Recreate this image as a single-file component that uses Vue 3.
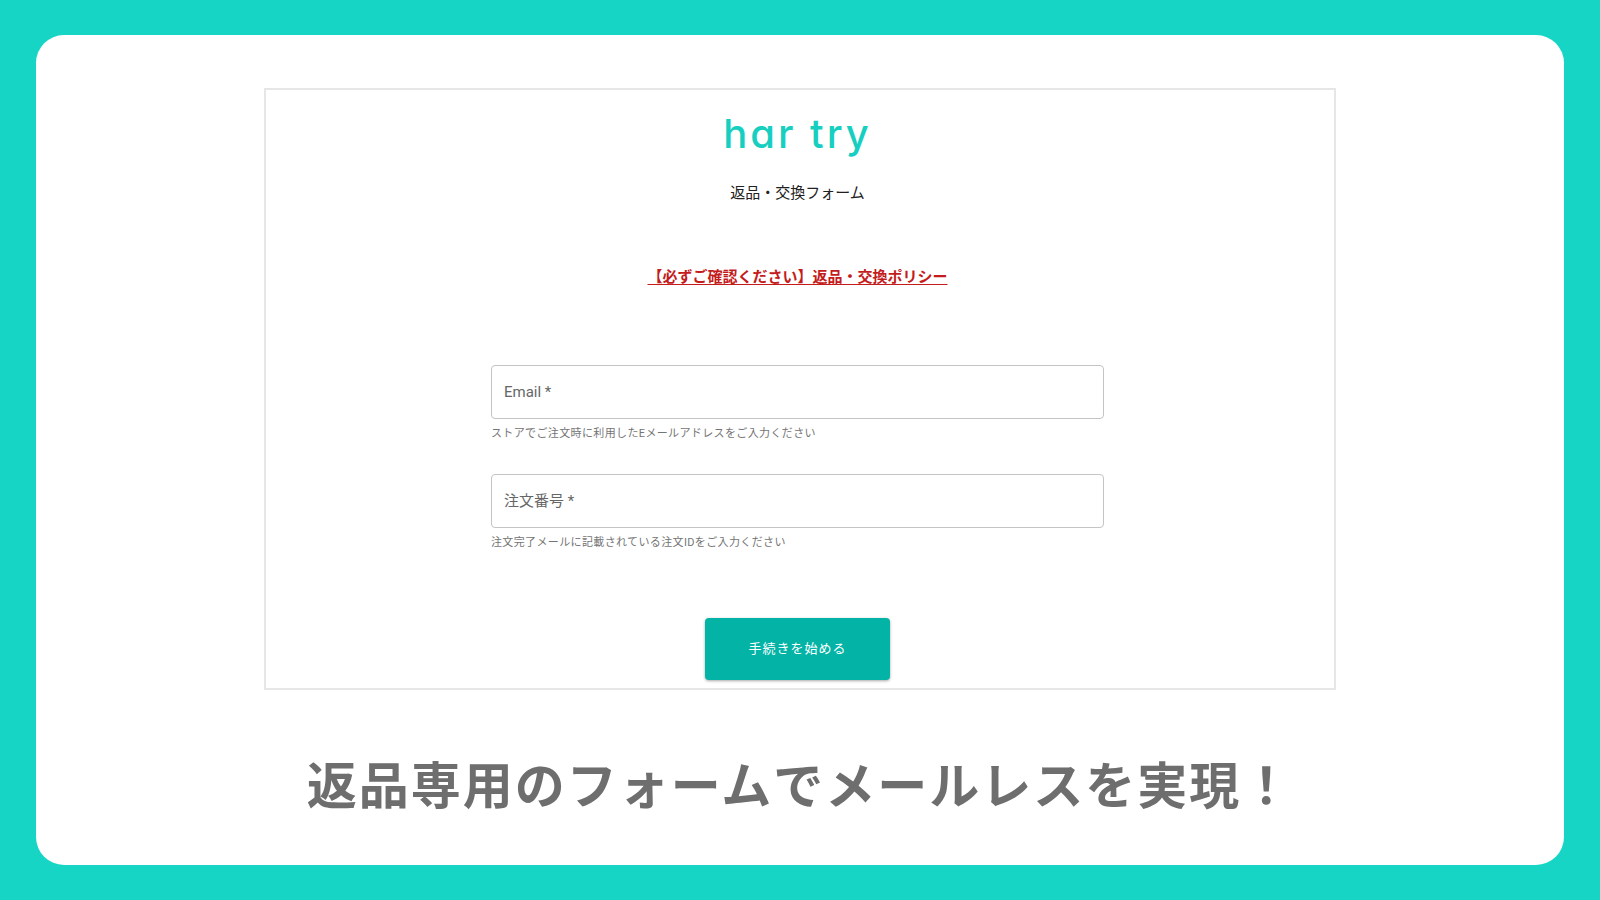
<script setup>
import { ref } from 'vue'

const fields = ref([
  { id: 'email', type: 'email', label: 'Email', value: '', help: 'ストアでご注文時に利用したEメールアドレスをご入力ください' },
  { id: 'order', type: 'text', label: '注文番号', value: '', help: '注文完了メールに記載されている注文IDをご入力ください' },
])
</script>

<template>
  <div class="page">
    <main class="card">
      <section class="frame">
        <div class="logo">har try</div>
        <h1 class="title">返品・交換フォーム</h1>
        <a class="policy" href="#policy">【必ずご確認ください】返品・交換ポリシー</a>
        <form class="form" novalidate @submit.prevent>
          <div v-for="f in fields" :key="f.id" class="field">
            <div class="control">
              <input
                :id="f.id"
                v-model="f.value"
                class="input"
                :type="f.type"
                required
                :aria-describedby="f.id + '-help'"
              />
              <label v-show="!f.value" class="label" :for="f.id">{{ f.label }} *</label>
            </div>
            <p :id="f.id + '-help'" class="help">{{ f.help }}</p>
          </div>
          <button class="submit" type="submit">手続きを始める</button>
        </form>
      </section>
      <p class="headline">返品専用のフォームでメールレスを実現！</p>
    </main>
  </div>
</template>

<style>
body {
  margin: 0;
}
</style>

<style scoped>
.page {
  box-sizing: border-box;
  min-height: 100vh;
  display: flex;
  padding: 35px 36px;
  background: #17d5c5;
  font-family: Roboto, "Noto Sans CJK JP", sans-serif;
}

.card {
  flex: 1;
  min-width: 0;
  display: flex;
  flex-direction: column;
  align-items: center;
  padding: 53px 24px 24px;
  box-sizing: border-box;
  border-radius: 28px;
  background: #fff;
}

.frame {
  box-sizing: border-box;
  width: 100%;
  max-width: 1072px;
  display: flex;
  flex-direction: column;
  align-items: center;
  padding: 18px 5px 8px 0;
  border: 2px solid #e6e6e6;
}

.logo {
  color: #17cfc0;
  font-family: Inter, sans-serif;
  font-size: 40px;
  font-weight: 500;
  font-feature-settings: "cv11";
  line-height: 52px;
  letter-spacing: 3px;
}

.title {
  margin: 23px 0 0;
  color: #212121;
  font-size: 15px;
  font-weight: 400;
  line-height: 20px;
}

.policy {
  margin-top: 62px;
  color: #c41c1c;
  font-size: 15px;
  font-weight: 700;
  line-height: 24px;
  text-decoration: underline;
  text-underline-offset: 2px;
}

.form {
  width: 100%;
  max-width: 613px;
  display: flex;
  flex-direction: column;
  align-items: center;
  margin-top: 76px;
}

.field {
  width: 100%;
  margin-bottom: 30px;
}

.control {
  display: grid;
}

.input,
.label {
  grid-area: 1 / 1;
  font-family: inherit;
  font-size: 15px;
}

.input {
  box-sizing: border-box;
  width: 100%;
  height: 54px;
  padding: 0 13px;
  border: 1px solid #c4c4c4;
  border-radius: 4px;
  background: transparent;
}

.label {
  align-self: center;
  justify-self: start;
  margin-left: 13px;
  color: #666;
  line-height: 24px;
  pointer-events: none;
}

.help {
  margin: 5px 0 0;
  color: #757575;
  font-size: 11px;
  line-height: 20px;
  letter-spacing: 0.03333em;
}

.submit {
  margin-top: 35px;
  padding: 20px 43px;
  border: 0;
  border-radius: 4px;
  background: #02b3a6;
  box-shadow: 0 1px 3px rgba(0, 0, 0, 0.35);
  color: #fff;
  font-family: inherit;
  font-size: 13px;
  line-height: 22px;
  letter-spacing: 1px;
}

.headline {
  margin: 55px 0 0;
  color: #6e6e6e;
  font-family: "Noto Sans CJK JP", sans-serif;
  font-size: 50px;
  font-weight: 700;
  line-height: 74px;
  letter-spacing: 2px;
  text-align: center;
}
</style>
